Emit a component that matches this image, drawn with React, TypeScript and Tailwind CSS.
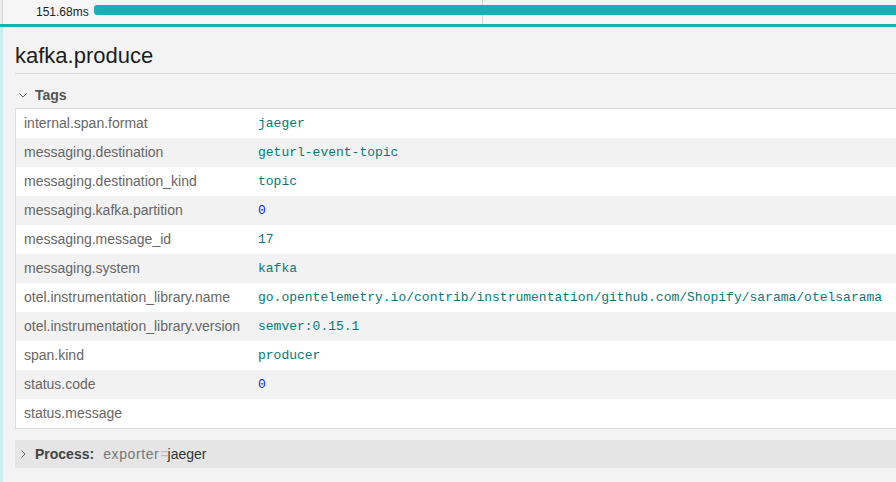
import React from 'react';

const tags: { key: string; value: string; kind: 'string' | 'number' | 'empty' }[] = [
  { key: 'internal.span.format', value: 'jaeger', kind: 'string' },
  { key: 'messaging.destination', value: 'geturl-event-topic', kind: 'string' },
  { key: 'messaging.destination_kind', value: 'topic', kind: 'string' },
  { key: 'messaging.kafka.partition', value: '0', kind: 'number' },
  { key: 'messaging.message_id', value: '17', kind: 'string' },
  { key: 'messaging.system', value: 'kafka', kind: 'string' },
  {
    key: 'otel.instrumentation_library.name',
    value: 'go.opentelemetry.io/contrib/instrumentation/github.com/Shopify/sarama/otelsarama',
    kind: 'string',
  },
  { key: 'otel.instrumentation_library.version', value: 'semver:0.15.1', kind: 'string' },
  { key: 'span.kind', value: 'producer', kind: 'string' },
  { key: 'status.code', value: '0', kind: 'number' },
  { key: 'status.message', value: '', kind: 'empty' },
];

function Chevron({ down }: { down?: boolean }) {
  return (
    <svg width="10" height="10" viewBox="0 0 10 10" className="shrink-0">
      {down ? (
        <path d="M1.5 3.5 L5 7 L8.5 3.5" fill="none" stroke="#666" strokeWidth="1" />
      ) : (
        <path d="M3.5 1.5 L7 5 L3.5 8.5" fill="none" stroke="#666" strokeWidth="1" />
      )}
    </svg>
  );
}

export default function App() {
  return (
    <div
      className="w-[896px] h-[482px] overflow-hidden flex bg-[#f3f3f3]"
      style={{ fontFamily: '"Liberation Sans", Arial, sans-serif' }}
    >
      {/* left gutter */}
      <div className="w-[3px] flex flex-col shrink-0">
        <div className="h-[24px] bg-[#ececec] border-r border-[#d4d4d4]" />
        <div className="h-[3px] bg-[#17b0b8]" />
        <div className="flex-1 bg-[#cdeef1]" />
      </div>

      <div className="flex-1 flex flex-col min-w-0">
        {/* timeline row */}
        <div className="relative h-[24px] bg-[#f6f6f6] flex items-center">
          <div className="absolute left-[479px] top-0 bottom-0 w-px bg-[#d4d4d4]" />
          <span className="ml-[33px] w-[58px] text-[12px] text-[#222] leading-none">151.68ms</span>
          <div className="relative flex-1 h-[10px] bg-[#17b0b8] rounded-l-[3px] mt-[-4px]" />
        </div>
        <div className="h-[3px] bg-[#17b0b8]" />

        <div className="pl-[12px]">
          <h1 className="mt-[16px] text-[22px] leading-[26px] text-[#1c1c1c] font-normal">kafka.produce</h1>
          <div className="mt-[4px] border-b border-[#d8d8d8]" />

          {/* Tags */}
          <div className="mt-[11px] flex items-center h-[20px]">
            <div className="w-[20px] pl-[3px] flex items-center">
              <Chevron down />
            </div>
            <span className="text-[14px] font-bold text-[#555]">Tags</span>
          </div>
          <div className="mt-[3px] border border-[#dcdcdc] border-r-0 bg-white">
            {tags.map((t, i) => (
              <div
                key={t.key}
                className={`flex items-center h-[29px] ${i % 2 === 1 ? 'bg-[#f2f2f2]' : 'bg-white'}`}
              >
                <div className="w-[234px] shrink-0 pl-[8px] text-[14px] text-[#666] whitespace-nowrap">{t.key}</div>
                <div
                  className={`pl-[8px] text-[13px] whitespace-nowrap ${t.kind === 'number' ? 'text-[#1a1af2]' : 'text-[#087978]'}`}
                  style={{ fontFamily: '"Liberation Mono", "Courier New", monospace' }}
                >
                  {t.value}
                </div>
              </div>
            ))}
          </div>

          {/* Process */}
          <div className="mt-[11px] h-[28px] bg-[#e5e5e5] flex items-center">
            <div className="w-[20px] pl-[3px] flex items-center">
              <Chevron />
            </div>
            <span className="text-[14px] font-bold text-[#444]">Process:</span>
            <span className="ml-[9px] text-[14px] tracking-[0.6px] text-[#777]">exporter</span>
            <span className="ml-[1px] mr-[-1px] text-[14px] text-[#bbb]">=</span>
            <span className="text-[14px] text-[#333]">jaeger</span>
          </div>
        </div>
      </div>
    </div>
  );
}
